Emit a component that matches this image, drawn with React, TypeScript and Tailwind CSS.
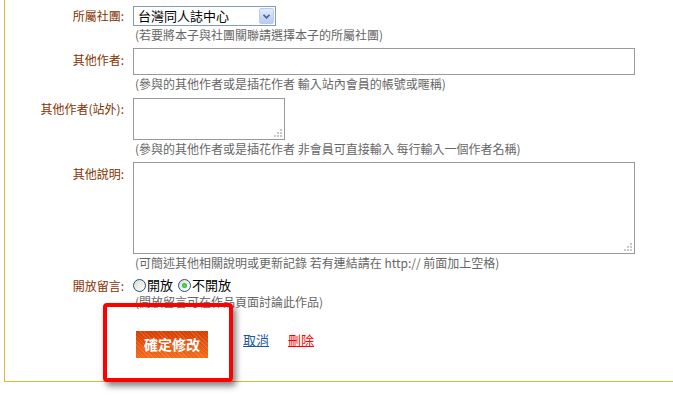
import React from "react";

const Label = ({ text, className = "" }: { text: string; className?: string }) => (
  <div className={`w-[119px] shrink-0 text-right text-[12px] leading-[14px] text-[#853200] ${className}`}>
    {text}
  </div>
);

const Help = ({ children }: { children: React.ReactNode }) => (
  <div className="mt-[2px] pl-[2px] text-[12px] leading-[14px] text-[#666]">{children}</div>
);

const Grip = () => (
  <svg className="absolute right-[2px] bottom-[2px]" width="8" height="8" viewBox="0 0 8 8">
    <rect x="6" y="0" width="2" height="2" fill="#c8c8c8" />
    <rect x="3" y="3" width="2" height="2" fill="#c8c8c8" />
    <rect x="6" y="3" width="2" height="2" fill="#c8c8c8" />
    <rect x="0" y="6" width="2" height="2" fill="#c8c8c8" />
    <rect x="3" y="6" width="2" height="2" fill="#c8c8c8" />
    <rect x="6" y="6" width="2" height="2" fill="#c8c8c8" />
  </svg>
);

const Radio = ({ checked }: { checked?: boolean }) => (
  <span className="flex h-[13px] w-[13px] items-center justify-center rounded-full border border-[#1c5180] bg-[linear-gradient(135deg,#dcdcd6,#ffffff)]">
    {checked && <span className="h-[5px] w-[5px] rounded-full bg-[radial-gradient(circle,#5fe05f,#21a121)]" />}
  </span>
);

export default function App() {
  return (
    <div className="relative h-[395px] w-[673px] overflow-hidden bg-white font-['Noto_Sans_CJK_TC','Noto_Sans_CJK_SC',sans-serif]">
      <div className="ml-[4px] h-[382px] border-b border-l border-[#e3b53a] pt-[6px]">
        {/* 所屬社團 */}
        <div className="flex gap-[9px]">
          <Label text="所屬社團:" className="pt-[3px]" />
          <div>
            <div className="flex h-[20px] w-[143px] items-center justify-between border border-[#7f9db9] bg-white pl-[4px] pr-[1px]">
              <span className="text-[13px] leading-[16px] text-black">台灣同人誌中心</span>
              <span className="flex h-[16px] w-[15px] items-center justify-center rounded-[2px] border border-[#b9cbf3] bg-[linear-gradient(#e3ebfd,#b7cbf6)]">
                <svg width="7" height="5" viewBox="0 0 7 5">
                  <path d="M0.5 0.8 L3.5 3.8 L6.5 0.8" fill="none" stroke="#4d6185" strokeWidth="1.6" />
                </svg>
              </span>
            </div>
            <Help>(若要將本子與社團關聯請選擇本子的所屬社團)</Help>
          </div>
        </div>

        {/* 其他作者 */}
        <div className="mt-[6px] flex gap-[9px]">
          <Label text="其他作者:" className="pt-[5px]" />
          <div>
            <input className="block h-[27px] w-[502px] border border-[#999] outline-none" />
            <Help>(參與的其他作者或是插花作者 輸入站內會員的帳號或暱稱)</Help>
          </div>
        </div>

        {/* 其他作者(站外) */}
        <div className="mt-[7px] flex gap-[9px]">
          <Label text="其他作者(站外):" className="pt-[4px]" />
          <div>
            <div className="relative h-[42px] w-[152px] border border-[#999]">
              <Grip />
            </div>
            <Help>(參與的其他作者或是插花作者 非會員可直接輸入 每行輸入一個作者名稱)</Help>
          </div>
        </div>

        {/* 其他說明 */}
        <div className="mt-[6px] flex gap-[9px]">
          <Label text="其他說明:" className="pt-[5px]" />
          <div>
            <div className="relative h-[92px] w-[502px] border border-[#999]">
              <Grip />
            </div>
            <Help>(可簡述其他相關說明或更新記錄 若有連結請在 http:// 前面加上空格)</Help>
          </div>
        </div>

        {/* 開放留言 */}
        <div className="mt-[7px] flex gap-[9px]">
          <Label text="開放留言:" className="pt-[2px]" />
          <div>
            <div className="flex h-[16px] items-center text-[13px] leading-[16px] text-black">
              <Radio />
              <span className="ml-[1px]">開放</span>
              <span className="ml-[5px]">
                <Radio checked />
              </span>
              <span className="ml-[1px]">不開放</span>
            </div>
            <Help>(開放留言可在作品頁面討論此作品)</Help>
          </div>
        </div>

        {/* buttons */}
        <div className="mt-[22px] flex items-start pl-[131px]">
          <button className="h-[27px] w-[72px] bg-[repeating-linear-gradient(45deg,rgba(255,255,255,0.14)_0px,rgba(255,255,255,0.14)_1px,transparent_1px,transparent_3px),linear-gradient(#d83c00,#f26a18)] text-[14px] font-bold text-white">
            確定修改
          </button>
          <a href="#" className="ml-[35px] mt-[1px] text-[13px] leading-[15px] text-[#1a5a9c] underline">
            取消
          </a>
          <a href="#" className="ml-[19px] mt-[1px] text-[13px] leading-[15px] text-[#ff0000] underline">
            刪除
          </a>
        </div>
      </div>

      {/* highlight box */}
      <div className="absolute left-[103px] top-[303px] h-[79px] w-[130px] rounded-[4px] border-[4px] border-[#ff0000] shadow-[3px_4px_6px_rgba(0,0,0,0.5)]" />
    </div>
  );
}
